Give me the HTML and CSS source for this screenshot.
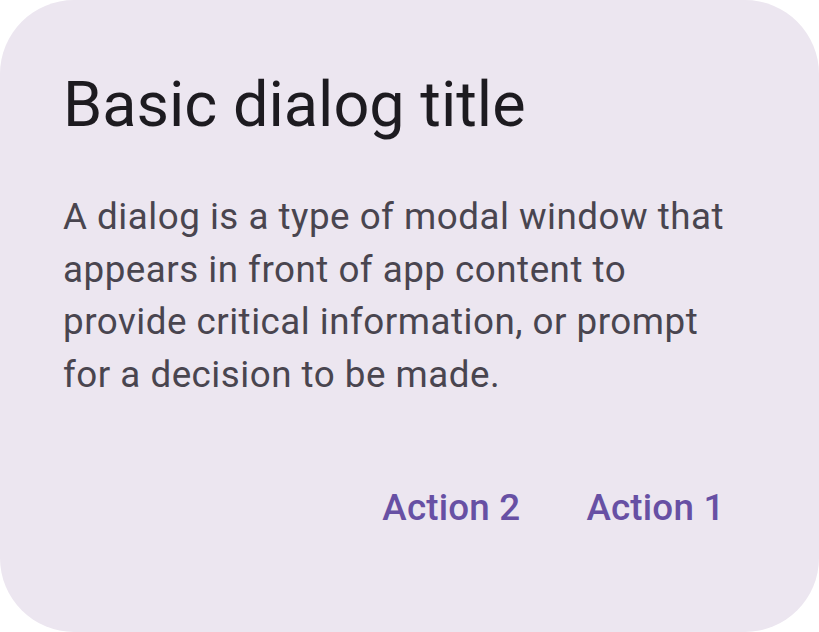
FILE: index.html
```html
<!DOCTYPE html>
<html lang="en">
<head>
  <meta charset="UTF-8" />
  <meta name="viewport" content="width=device-width, initial-scale=1.0" />
  <title>Basic dialog</title>
  <link rel="stylesheet" href="styles.css">
</head>
<body>

  <div class="dialog" role="dialog" aria-labelledby="dialogTitle">
    <h2 class="dialog-title" id="dialogTitle">Basic dialog title</h2>
    <p class="dialog-body">
      A dialog is a type of modal window that appears in front of app content to provide critical information, or prompt for a decision to be made.
    </p>
    <div class="dialog-actions">
      <button class="text-btn">Action 2</button>
      <button class="text-btn">Action 1</button>
    </div>
  </div>

</body>
</html>
```

FILE: styles.css
```css
:root {
  --surface-high: #ece6f0;
  --on-surface: #1d1b20;
  --on-surface-variant: #49454f;
  --primary: #6750a4;
}

* {
  box-sizing: border-box;
}

body {
  margin: 0;
  background-color: #fff;
  font-family: Roboto, 'Noto Sans', sans-serif;
}

/* Dialog (M3 basic dialog, scaled up 2.625x) */
.dialog {
  width: 819px;
  height: 632px;
  background-color: var(--surface-high);
  border-radius: 74px;
  padding: 63px;
  display: flex;
  flex-direction: column;
}

.dialog-title {
  margin: 0 0 44px;
  font-size: 63px;
  line-height: 84px;
  font-weight: 400;
  color: var(--on-surface);
}

.dialog-body {
  margin: 0;
  max-width: 670px; /* quebra "for" para a última linha */
  font-size: 36.75px;
  line-height: 52.5px;
  letter-spacing: 0.5px;
  color: var(--on-surface-variant);
}

.dialog-actions {
  margin-top: 54px;
  display: flex;
  justify-content: flex-end;
  gap: 3px;
}

.text-btn {
  background: none;
  border: none;
  cursor: pointer;
  height: 105px;
  padding: 0 31.5px;
  border-radius: 52px;
  font-family: inherit;
  font-size: 36.75px;
  font-weight: 500;
  letter-spacing: 0.2px;
  color: var(--primary);
}
```
